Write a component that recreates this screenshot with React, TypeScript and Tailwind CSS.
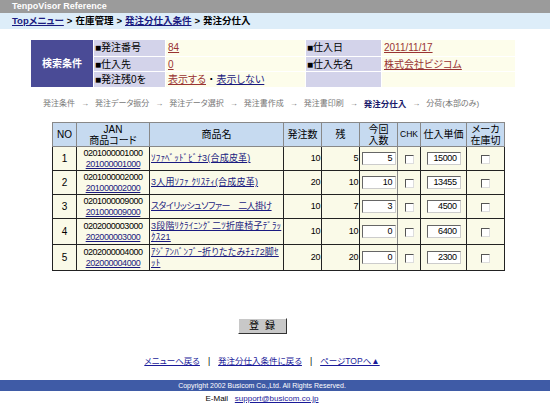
type Row = {
  no: number;
  jan: string;
  code: string;
  name: string;
  qty: number;
  rest: number;
  now: number;
  price: number;
};

const rows: Row[] = [
  { no: 1, jan: "0201000001000", code: "201000001000", name: "ｿﾌｧﾍﾞｯﾄﾞﾋﾞﾅ3(合成皮革)", qty: 10, rest: 5, now: 5, price: 15000 },
  { no: 2, jan: "0201000002000", code: "201000002000", name: "3人用ｿﾌｧ ｸﾘｽﾃｨ(合成皮革)", qty: 20, rest: 10, now: 10, price: 13455 },
  { no: 3, jan: "0201000009000", code: "201000009000", name: "スタイリッシュソファー　二人掛け", qty: 10, rest: 7, now: 3, price: 4500 },
  { no: 4, jan: "0202000003000", code: "202000003000", name: "3段階ﾘｸﾗｲﾆﾝｸﾞ二ﾂ折座椅子ﾃﾞﾗｯｸｽ21", qty: 10, rest: 10, now: 0, price: 6400 },
  { no: 5, jan: "0202000004000", code: "202000004000", name: "ｱｼﾞｱﾝﾊﾞﾝﾌﾞｰ折りたたみﾁｪｱ2脚ｾｯﾄ", qty: 20, rest: 20, now: 0, price: 2300 },
];

const steps = ["発注条件", "発注データ振分", "発注データ選択", "発注書作成", "発注書印刷", "発注分仕入", "分荷(本部のみ)"];

function Box() {
  return <span className="inline-block w-[9px] h-[9px] bg-white border border-t-[#555] border-l-[#555] border-b-[#ddd] border-r-[#ddd] align-middle" />;
}

function Field({ value }: { value: number }) {
  return (
    <div className="w-[34px] h-[13px] bg-white border border-t-[#666] border-l-[#666] border-b-[#ccc] border-r-[#ccc] text-right pr-[3px] leading-[11px] text-[9px] tracking-[-0.4px] mx-auto">
      {value}
    </div>
  );
}

const td = "border border-[#222]";

export default function App() {
  return (
    <div className="w-[550px] h-[414px] bg-white text-black text-[10px] overflow-hidden font-['Liberation_Sans','Noto_Sans_CJK_JP',sans-serif] [font-feature-settings:'palt']">
      <div className="h-[13px] bg-[#9b9b9b] text-white font-bold text-[9px] leading-[13px] pl-[12px]">TenpoVisor Reference</div>
      <div className="h-[16px] bg-[#ddedf9] font-bold text-[9.5px] leading-[16px] pl-[12px] flex gap-[3px]">
        <a className="text-[#1a1a80] underline">Topメニュー</a>
        <span>&gt;</span>
        <span>在庫管理</span>
        <span>&gt;</span>
        <a className="text-[#1a1a80] underline">発注分仕入条件</a>
        <span>&gt;</span>
        <span>発注分仕入</span>
      </div>

      <div className="mt-[11px] ml-[31px] w-[484px] flex bg-[#fdfdeb]">
        <div className="w-[62px] h-[47px] bg-[#4a4b96] text-white font-bold flex items-center justify-center">検索条件</div>
        <div className="flex-1 flex flex-col">
          {[
            ["■発注番号", "84", "■仕入日", "2011/11/17"],
            ["■仕入先", "0", "■仕入先名", "株式会社ビジコム"],
            ["■発注残0を", "", "", ""],
          ].map((r, i) => (
            <div key={i} className={`flex h-[15.66px] leading-[15px] ${i > 0 ? "border-t border-white" : ""}`}>
              <div className="w-[72px] bg-[#d3d3ea] pl-[1px] border-l border-white">{r[0]}</div>
              <div className="w-[140px] pl-[2px] border-l border-white">
                {i === 2 ? (
                  <>
                    <a className="text-[#993333] underline">表示する</a> ・ <a className="text-[#1a1a80] underline">表示しない</a>
                  </>
                ) : (
                  <a className="text-[#993333] underline">{r[1]}</a>
                )}
              </div>
              <div className="w-[76px] bg-[#d3d3ea] pl-[1px] border-l border-white">{r[2]}</div>
              <div className="flex-1 pl-[2px] border-l border-white">
                <a className="text-[#993333] underline">{r[3]}</a>
              </div>
            </div>
          ))}
        </div>
      </div>

      <div className="mt-[9px] h-[16px] leading-[16px] pl-[43px] text-[#777] text-[8px] flex gap-[6px]">
        {steps.map((s, i) => (
          <span key={s} className="flex gap-[6px]">
            <span className={s === "発注分仕入" ? "font-bold text-[#1a1a6a] text-[8.5px]" : ""}>{s}</span>
            {i < steps.length - 1 && <span>→</span>}
          </span>
        ))}
      </div>

      <table className="mt-[10px] ml-[52px] w-[452px] border-collapse border border-black table-fixed text-[10px]">
        <colgroup>
          <col className="w-[24px]" />
          <col className="w-[73px]" />
          <col className="w-[134px]" />
          <col className="w-[38px]" />
          <col className="w-[38px]" />
          <col className="w-[38px]" />
          <col className="w-[23px]" />
          <col className="w-[46px]" />
          <col className="w-[38px]" />
        </colgroup>
        <thead>
          <tr className="bg-[#c6daf0] h-[24px] leading-[11px]">
            <th className="font-normal border border-[#888]">NO</th>
            <th className="font-normal border border-[#888]">JAN<br />商品コード</th>
            <th className="font-normal border border-[#888]">商品名</th>
            <th className="font-normal border border-[#888]">発注数</th>
            <th className="font-normal border border-[#888]">残</th>
            <th className="font-normal border border-[#888]">今回<br />入数</th>
            <th className="font-normal border border-[#888] text-[8.5px]">CHK</th>
            <th className="font-normal border border-[#888]">仕入単価</th>
            <th className="font-normal border border-[#888]">メーカ<br />在庫切</th>
          </tr>
        </thead>
        <tbody>
          {rows.map((r) => (
            <tr key={r.no} className={`bg-[#fafae8] leading-[11px] ${r.no >= 4 ? "h-[26px]" : "h-[24px]"}`}>
              <td className={`${td} text-center`}>{r.no}</td>
              <td className={`${td} text-center text-[9px] tracking-[-0.45px] whitespace-nowrap overflow-hidden`}>
                {r.jan}
                <br />
                <a className="text-[#1a1a80] underline">{r.code}</a>
              </td>
              <td className={`${td} pl-[1px] text-[9px] break-all ${r.no === 3 ? "tracking-[-0.6px]" : "tracking-[0.2px]"}`}>
                <a className="text-[#1a1a80] underline">{r.name}</a>
              </td>
              <td className={`${td} text-right pr-[1px] text-[9px] tracking-[-0.4px]`}>{r.qty}</td>
              <td className={`${td} text-right pr-[1px] text-[9px] tracking-[-0.4px]`}>{r.rest}</td>
              <td className={`${td} border-r-[#888] px-[2px]`}>
                <Field value={r.now} />
              </td>
              <td className={`${td} border-l-[#888] text-center`}>
                <Box />
              </td>
              <td className={`${td} text-center`}>
                <Field value={r.price} />
              </td>
              <td className={`${td} text-center`}>
                <Box />
              </td>
            </tr>
          ))}
        </tbody>
      </table>

      <div className="w-[524px] mt-[47px] flex justify-center">
        <button className="w-[49px] h-[16px] bg-[#c8c8c8] border border-t-white border-l-white border-b-[#333] border-r-[#333] text-[10px] leading-[14px] tracking-[6px] pl-[6px]">登録</button>
      </div>

      <div className="w-[524px] mt-[20px] h-[14px] leading-[14px] flex justify-center gap-[8px] text-[8.5px]">
        <a className="text-[#1a1a99] underline">メニューへ戻る</a>
        <span>|</span>
        <a className="text-[#1a1a99] underline">発注分仕入条件に戻る</a>
        <span>|</span>
        <a className="text-[#1a1a99] underline">ページTOPへ▲</a>
      </div>

      <div className="mt-[12px] h-[11px] bg-[#3f5ba6] text-white text-[7px] leading-[11px]">
        <div className="w-[524px] text-center">Copyright 2002 Busicom Co.,Ltd. All Rights Reserved.</div>
      </div>
      <div className="w-[524px] mt-[1px] text-center text-[8px] leading-[14px]">
        E-Mail&nbsp;&nbsp;&nbsp;<a className="text-[#1a1a99] underline">support@busicom.co.jp</a>
      </div>
    </div>
  );
}
